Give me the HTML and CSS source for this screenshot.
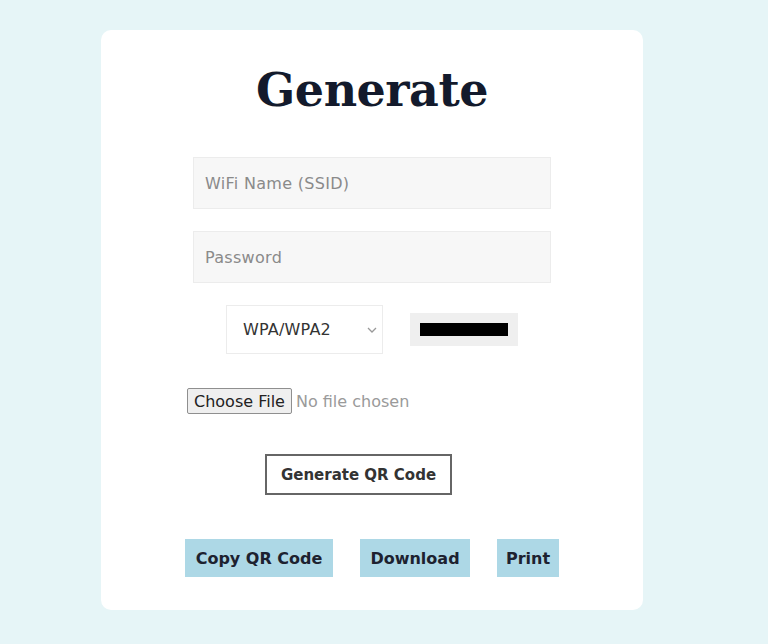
FILE: index.html
```html
<!DOCTYPE html>
<html>
<head>
<meta charset="utf-8">
<link rel="stylesheet" href="styles.css">
</head>
<body>
<main class="card">
  <h1 class="title">Generate</h1>
  <input class="field" type="text" placeholder="WiFi Name (SSID)">
  <input class="field" type="password" placeholder="Password">
  <div class="row">
    <div class="select-wrap">
      <select class="enc">
        <option>WPA/WPA2</option>
        <option>WEP</option>
        <option>None</option>
      </select>
      <svg class="chev" width="10" height="6" viewBox="0 0 10 6"><path d="M1 1l4 4 4-4" fill="none" stroke="#999" stroke-width="1.3"/></svg>
    </div>
    <input class="color" type="color" value="#000000">
  </div>
  <input class="file" type="file">
  <button class="gen">Generate QR Code</button>
  <div class="actions">
    <button class="act copy">Copy QR Code</button>
    <button class="act dl">Download</button>
    <button class="act pr">Print</button>
  </div>
</main>
</body>
</html>
```
FILE: styles.css
```css
html, body {
  margin: 0;
  padding: 0;
}
body {
  background: #e6f5f7;
  font-family: "DejaVu Sans", "Open Sans", sans-serif;
  padding: 30px 0 0 101px;
  height: 644px;
  box-sizing: border-box;
}
.card {
  width: 542px;
  height: 580px;
  box-sizing: border-box;
  background: #fff;
  border-radius: 10px;
  display: flex;
  flex-direction: column;
  align-items: center;
  padding-top: 34px;
}
.title {
  margin: 0;
  font-family: "DejaVu Serif", "Liberation Serif", serif;
  font-weight: bold;
  font-size: 46px;
  line-height: 52px;
  color: #131a2c;
  letter-spacing: -0.5px;
}
.field {
  width: 358px;
  height: 52px;
  box-sizing: border-box;
  border: 1px solid #ececec;
  background: #f7f7f7;
  padding: 0 11px;
  font-family: inherit;
  font-size: 16px;
  letter-spacing: 0.3px;
  color: #333;
  outline: none;
}
.field::placeholder {
  color: #8a8a8a;
}
.title + .field {
  margin-top: 41px;
}
.field + .field {
  margin-top: 22px;
}
.row {
  display: flex;
  align-items: center;
  gap: 27px;
  margin-top: 22px;
}
.select-wrap {
  position: relative;
  display: flex;
}
.enc {
  width: 157px;
  height: 49px;
  box-sizing: border-box;
  border: 1px solid #ececec;
  background: #fff;
  padding: 0 16px;
  font-family: inherit;
  font-size: 16px;
  letter-spacing: 0.2px;
  color: #333;
  border-radius: 0;
  -webkit-appearance: none;
  appearance: none;
  outline: none;
}
.chev {
  position: absolute;
  right: 6px;
  top: 22px;
  pointer-events: none;
}
.color {
  width: 108px;
  height: 33px;
  box-sizing: border-box;
  border: none;
  background: #efefef;
  padding: 0;
  -webkit-appearance: none;
  appearance: none;
}
.color::-webkit-color-swatch-wrapper {
  padding: 10px 10px;
}
.color::-webkit-color-swatch {
  border: none;
  border-radius: 0;
}
.file {
  width: 370px;
  margin-top: 34px;
  font-family: inherit;
  font-size: 16px;
  color: #9a9a9a;
}
.file::file-selector-button {
  font-family: inherit;
  font-size: 16px;
  color: #222;
  background: #efefef;
  border: 1px solid #8f8f8f;
  border-radius: 2px;
  padding: 0 6px;
  height: 26px;
  margin-right: 4px;
}
.gen {
  margin-top: 40px;
  margin-right: 27px;
  width: 187px;
  height: 41px;
  background: #fff;
  border: 2px solid #666;
  font-family: inherit;
  font-weight: bold;
  font-size: 15px;
  color: #333;
  padding: 0;
}
.actions {
  display: flex;
  gap: 27px;
  margin-top: 44px;
}
.act {
  height: 38px;
  background: #add8e6;
  border: none;
  font-family: inherit;
  font-weight: bold;
  font-size: 16px;
  color: #1d2230;
  padding: 0;
  text-align: center;
}
.copy { width: 148px; }
.dl { width: 110px; }
.pr { width: 62px; }
```
